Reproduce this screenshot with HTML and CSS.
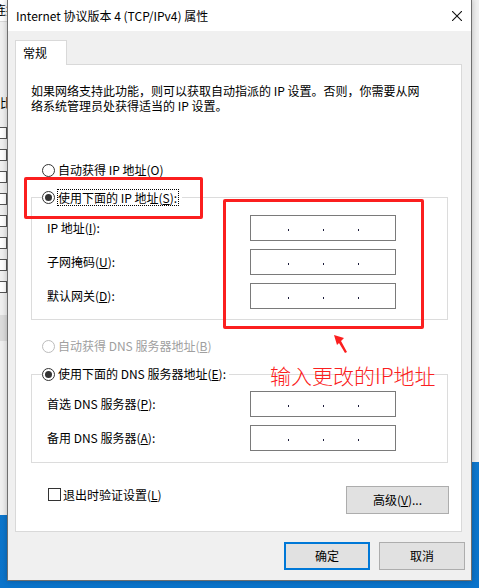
FILE: index.html
```html
<!DOCTYPE html>
<html lang="zh-CN">
<head>
<meta charset="UTF-8">
<title>Internet 协议版本 4 (TCP/IPv4) 属性</title>
<link rel="stylesheet" href="styles.css">
</head>
<body>

<!-- window behind the dialog -->
<div class="behind-left">
  <div class="bl-head"><span>连接</span></div>
  <div class="bl-word"><span>协议比</span></div>
  <div class="bl-list"><i></i><i></i><i></i><i></i><i></i><i></i><i></i><i></i></div>
  <div class="bl-band"></div>
</div>
<div class="behind-right"></div>

<div class="dialog">
  <div class="titlebar">
    <span class="title">Internet 协议版本 4 (TCP/IPv4) 属性</span>
    <svg class="close" width="10" height="10" viewBox="0 0 10 10"><path d="M0 0L10 10M10 0L0 10" stroke="#111" stroke-width="1.1" fill="none"/></svg>
  </div>

  <div class="body">
    <div class="tabs"><div class="tab">常规</div></div>

    <div class="panel">
      <p class="intro">如果网络支持此功能，则可以获取自动指派的 IP 设置。否则，你需要从网<br>络系统管理员处获得适当的 IP 设置。</p>

      <div class="radio first"><span class="circle"></span><span>自动获得 IP 地址(O)</span></div>

      <div class="group">
        <div class="radio legend"><span class="circle on"></span><span class="focus">使用下面的 IP 地址(<u>S</u>):</span></div>
        <div class="field first"><label>IP 地址(<u>I</u>):</label><div class="ip"><i></i><i></i><i></i></div></div>
        <div class="field"><label>子网掩码(<u>U</u>):</label><div class="ip"><i></i><i></i><i></i></div></div>
        <div class="field"><label>默认网关(<u>D</u>):</label><div class="ip"><i></i><i></i><i></i></div></div>
      </div>

      <div class="radio dns-auto disabled"><span class="circle"></span><span>自动获得 DNS 服务器地址(<u>B</u>)</span></div>

      <div class="group dns">
        <div class="radio legend"><span class="circle on"></span><span>使用下面的 DNS 服务器地址(<u>E</u>):</span></div>
        <div class="field first"><label>首选 DNS 服务器(<u>P</u>):</label><div class="ip"><i></i><i></i><i></i></div></div>
        <div class="field"><label>备用 DNS 服务器(<u>A</u>):</label><div class="ip"><i></i><i></i><i></i></div></div>
      </div>

      <div class="bottom-row">
        <div class="check"><span class="box"></span><span>退出时验证设置(<u>L</u>)</span></div>
        <button class="btn advanced">高级(<u>V</u>)...</button>
      </div>
    </div>

    <div class="actions">
      <button class="btn default">确定</button>
      <button class="btn">取消</button>
    </div>
  </div>
</div>

<!-- red annotations drawn on top of the screenshot -->
<div class="mark mark-radio"></div>
<div class="mark mark-fields"></div>
<svg class="arrow" width="20" height="24" viewBox="0 0 20 24"><polygon points="4,3 14,6 11,9 17,20 15,21 9,11 7,13" fill="#fb1f1f"/></svg>
<div class="note">输入更改的IP地址</div>

</body>
</html>
```

FILE: styles.css
```css
* { box-sizing: border-box; }
body {
  margin: 0;
  width: 479px; height: 588px;
  overflow: hidden; position: relative;
  background: linear-gradient(180deg, #1a86d8, #0b74cb);
  font-family: "Noto Sans CJK SC", "Noto Sans", sans-serif;
  font-size: 12px; color: #000;
}
u { text-decoration: underline; text-underline-offset: 1px; }

/* background window */
.behind-left {
  position: absolute; left: 0; top: 0;
  width: 8px; height: 515px;
  background: #f0f0f0; overflow: hidden;
  border-right: 1px solid #dadada;
}
.bl-head { height: 22px; background: #fff; border-bottom: 1px solid #d9d9d9; line-height: 20px; white-space: nowrap; }
.bl-head span, .bl-word span { margin-left: -6px; }
.bl-word { margin-top: 73px; line-height: 16px; white-space: nowrap; margin-left: -18px; }
.bl-list { margin-top: 16px; display: flex; flex-direction: column; gap: 10px; }
.bl-list i { display: block; width: 9px; height: 12px; margin-left: -2px; border: 1px solid #555; background: #fff; }
.bl-band { margin-top: 22px; height: 26px; background: #dcdcdc; }
.behind-right {
  position: absolute; right: 0; top: 0;
  width: 8px; height: 462px;
  background: #f0f0f0;
}

/* dialog */
.dialog {
  position: absolute; left: 7px; top: -1px;
  width: 465px; height: 582px;
  border: 1px solid #6f6f6f;
  background: #f0f0f0;
  box-shadow: 0 0 6px rgba(0,0,0,0.25);
  display: flex; flex-direction: column;
}
.titlebar {
  height: 31px; background: #fff;
  display: flex; align-items: center;
  padding-left: 8px;
}
.title { line-height: 16px; padding-top: 1px; }
.close { margin-left: auto; margin-right: 9px; margin-top: 1px; }

.body { padding: 9px 0 0 7px; }
.tabs { display: flex; }
.tab {
  position: relative; z-index: 1;
  width: 52px; height: 25px; margin-bottom: -1px;
  background: #fff;
  border: 1px solid #d9d9d9; border-bottom: none;
  padding-left: 7px; line-height: 23px;
}
.panel {
  width: 447px; height: 468px;
  border: 1px solid #d9d9d9; background: #fff;
  padding: 18px 0 0 15px;
}
.intro { margin: 0; line-height: 15px; }

.radio { display: flex; align-items: center; height: 18px; line-height: 18px; margin-left: 11px; }
.radio.first { margin-top: 48px; }
.circle {
  width: 13px; height: 13px; border-radius: 50%;
  border: 1px solid #333; background: #fff;
  margin-right: 3px; flex: none;
  display: flex; align-items: center; justify-content: center;
}
.circle.on::after { content: ""; width: 7px; height: 7px; border-radius: 50%; background: #333; }
.focus { border: 1px dotted #000; line-height: 15px; margin-left: -1px; padding: 0 1px 0 0; }
.disabled { color: #a0a0a0; }
.disabled .circle { border-color: #bcbcbc; }

.group {
  width: 417px; margin-top: 18px;
  border: 1px solid #dcdcdc;
  padding-bottom: 10px;
}
.group .legend {
  width: fit-content; margin-top: -10px; margin-left: 10px;
  background: #fff; padding-right: 3px;
}
.group.dns { margin-top: 19px; padding-bottom: 11px; }
.field { display: flex; align-items: center; height: 26px; padding-left: 15px; margin-top: 8px; }
.field.first { margin-top: 9px; }
.dns .field.first { margin-top: 8px; }
.field label { width: 203px; line-height: 16px; }
.ip {
  width: 146px; height: 26px;
  border: 1px solid #7a7a7a;
  display: flex; align-items: center; gap: 34px;
  padding-left: 37px; padding-top: 4px;
}
.ip i { width: 1px; height: 2px; background: #1b1b3a; }

.dns-auto { margin-top: 17px; }

.bottom-row { width: 417px; margin-top: 23px; display: flex; justify-content: space-between; align-items: flex-start; }
.check { display: flex; align-items: center; height: 13px; margin-top: 2px; margin-left: 17px; line-height: 16px; }
.box { width: 13px; height: 13px; border: 1px solid #333; margin-right: 2px; }

.btn {
  font: inherit; color: #000;
  background: #e1e1e1; border: 1px solid #adadad;
  height: 28px; padding: 0; line-height: 16px;
}
.advanced { width: 103px; margin-right: -1px; }

.actions { display: flex; justify-content: flex-end; gap: 9px; margin-top: 10px; padding-right: 6px; }
.actions .btn { width: 86px; }
.btn.default { border: 2px solid #0078d7; }

/* annotations */
.mark { position: absolute; border: 3px solid #fb1f1f; border-radius: 2px; }
.mark-radio { left: 24px; top: 177px; width: 179px; height: 42px; }
.mark-fields { left: 223px; top: 199px; width: 201px; height: 130px; }
.arrow { position: absolute; left: 330px; top: 332px; }
.note {
  position: absolute; left: 270px; top: 365px;
  font-size: 21px; line-height: 21px; font-weight: 300;
  color: #fb2020; white-space: nowrap;
}
```
